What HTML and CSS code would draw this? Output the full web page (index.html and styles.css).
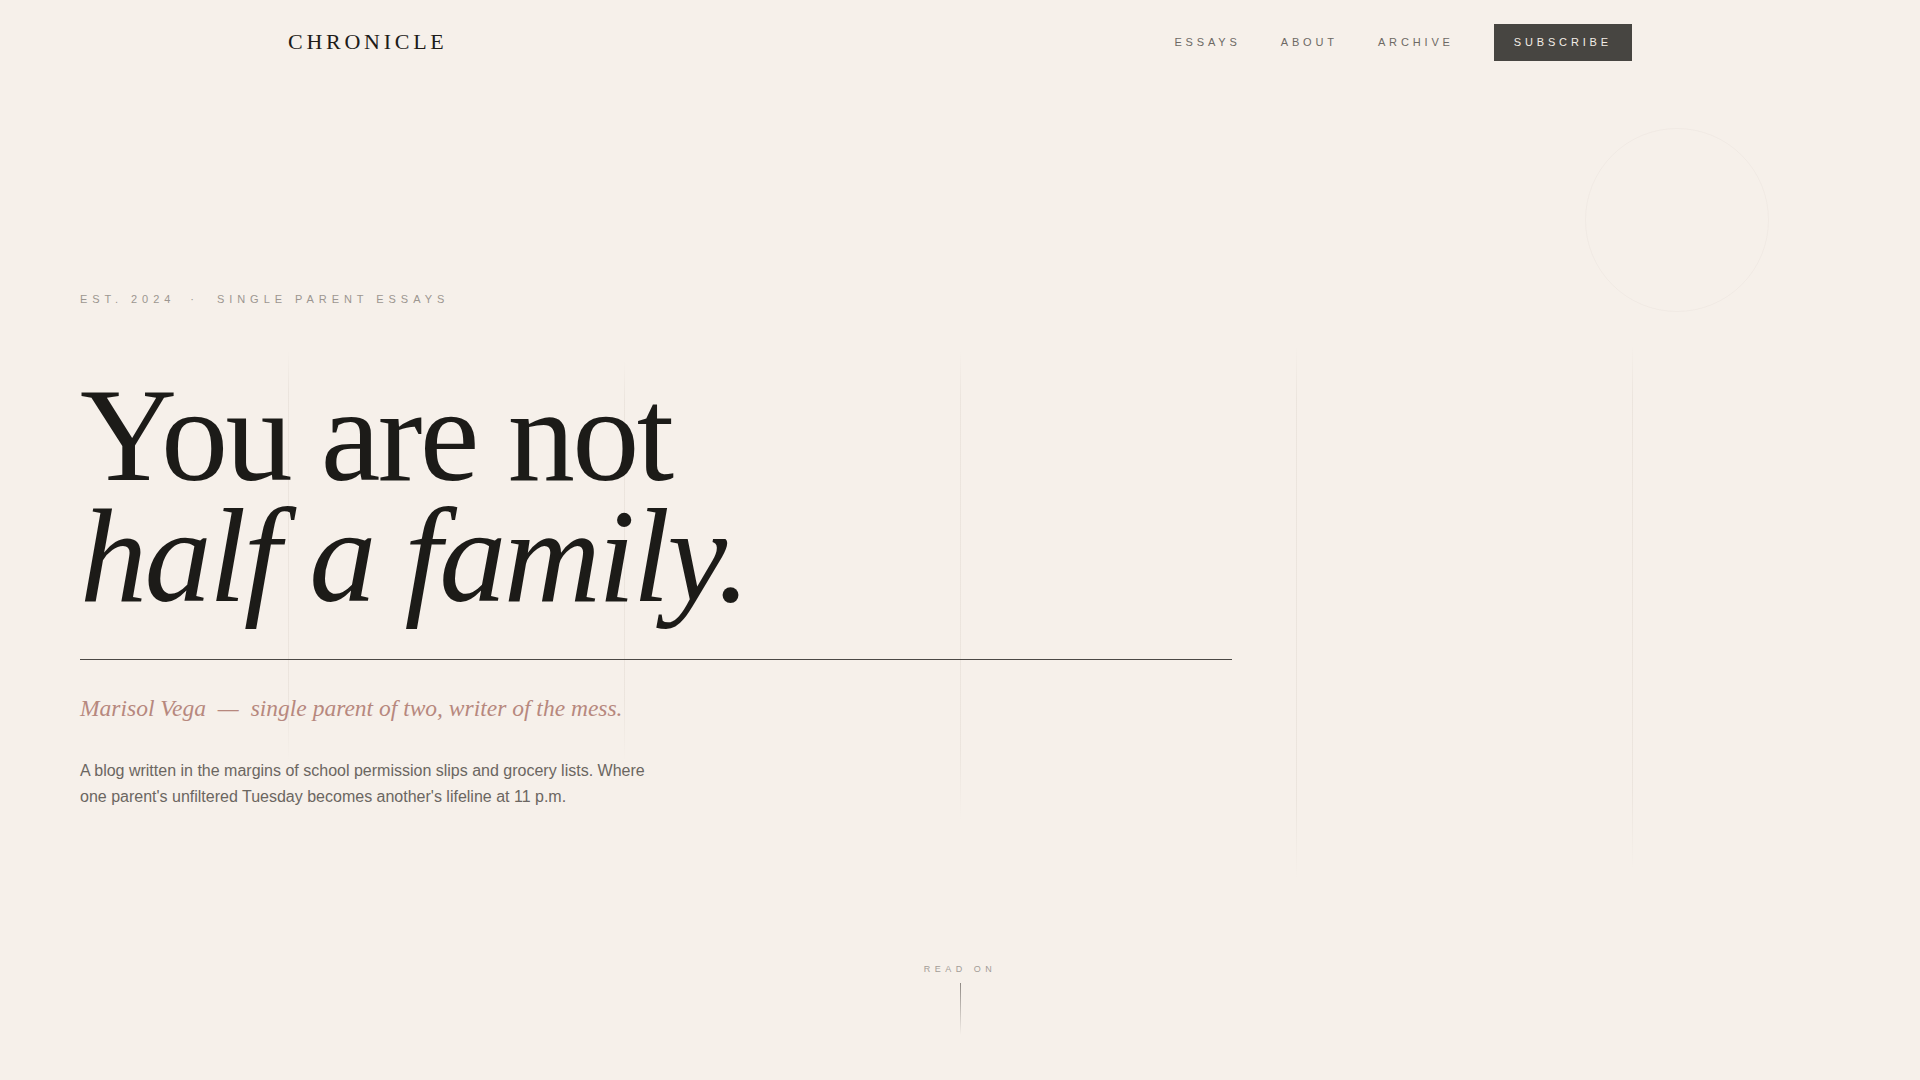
FILE: index.html
```html
<!DOCTYPE html>
<html lang="en">
<head>
    <meta charset="UTF-8">
    <meta name="viewport" content="width=device-width, initial-scale=1.0">
    <title>Chronicle</title>
    <link rel="stylesheet" href="styles.css">
</head>
<body>

    <header class="site-header">
        <a class="logo" href="#">CHRONICLE</a>
        <nav class="nav">
            <a href="#">Essays</a>
            <a href="#">About</a>
            <a href="#">Archive</a>
            <a class="subscribe" href="#">Subscribe</a>
        </nav>
    </header>

    <!-- faint column rules + ring behind the hero -->
    <div class="grid-lines">
        <span></span><span></span><span></span><span></span><span></span>
    </div>
    <div class="ring"></div>

    <main class="hero">
        <p class="eyebrow">Est. 2024<span class="sep">·</span>Single Parent Essays</p>
        <h1 class="headline">You are not<br><em>half a family.</em></h1>
        <p class="byline">Marisol Vega <span class="dash">—</span> single parent of two, writer of the mess.</p>
        <p class="intro">A blog written in the margins of school permission slips and grocery lists. Where one parent's unfiltered Tuesday becomes another's lifeline at 11 p.m.</p>
    </main>

    <div class="read-on">
        <span>Read on</span>
        <i class="read-line"></i>
    </div>

</body>
</html>
```

FILE: styles.css
```css
body {
    margin: 0;
    background-color: #f6f0ea;
    font-family: "Liberation Sans", Arial, sans-serif;
    color: #1e1c19;
    min-height: 100vh;
    overflow: hidden;
}
a {
    text-decoration: none;
}

/* header */
.site-header {
    display: flex;
    justify-content: space-between;
    align-items: center;
    height: 84px;
    padding: 0 15%;
    position: relative;
    z-index: 2;
}
.logo {
    font-family: "Liberation Serif", "Times New Roman", serif;
    font-size: 22px;
    letter-spacing: 0.17em;
    color: #1e1c19;
}
.nav {
    display: flex;
    align-items: center;
    gap: 40px;
}
.nav a {
    font-size: 11px;
    line-height: 13px;
    letter-spacing: 0.35em;
    text-transform: uppercase;
    color: #6d6964;
}
.nav .subscribe {
    background-color: #474541;
    color: #f3ede6;
    padding: 12px 20px;
}

/* background decoration */
.grid-lines {
    position: absolute;
    top: 345px;
    left: 15%;
    right: 15%;
    height: 540px;
    pointer-events: none;
}
.grid-lines span {
    position: absolute;
    top: 0;
    width: 1px;
    background: linear-gradient(to bottom, rgba(90, 70, 50, 0), rgba(90, 70, 50, 0.065) 10%, rgba(90, 70, 50, 0.065) 85%, rgba(90, 70, 50, 0));
}
.grid-lines span:nth-child(1) { left: 0; top: 6px; height: 410px; }
.grid-lines span:nth-child(2) { left: 25%; top: 16px; height: 400px; }
.grid-lines span:nth-child(3) { left: 50%; top: 6px; height: 470px; }
.grid-lines span:nth-child(4) { left: 75%; top: 0; height: 535px; }
.grid-lines span:nth-child(5) { left: 100%; top: 0; height: 525px; }

.ring {
    position: absolute;
    top: 128px;
    left: 1585px;
    width: 182px;
    height: 182px;
    border-radius: 50%;
    border: 1px solid rgba(90, 70, 50, 0.035);
    pointer-events: none;
}

/* hero */
.hero {
    position: relative;
    z-index: 1;
    padding: 207px 80px 0;
}
.eyebrow {
    margin: 0;
    font-size: 11px;
    line-height: 16px;
    letter-spacing: 0.45em;
    text-transform: uppercase;
    color: #9c9690;
}
.eyebrow .sep {
    margin: 0 18px 0 15px;
}
.headline {
    width: 1152px;
    margin: 68px 0 0;
    padding-bottom: 42px;
    border-bottom: 1px solid #4b4845;
    font-family: "Liberation Serif", "Times New Roman", serif;
    font-weight: 400;
    font-size: 134.4px;
    line-height: 0.9;
    letter-spacing: -0.02em;
    color: #1c1b18;
}
.headline em {
    font-style: italic;
}
.byline {
    margin: 32px 0 0;
    font-family: "Liberation Serif", "Times New Roman", serif;
    font-style: italic;
    font-size: 23.5px;
    line-height: 1.4;
    color: #b7887e;
}
.byline .dash {
    margin: 0 6px;
}
.intro {
    max-width: 580px;
    margin: 33px 0 0;
    font-size: 16px;
    line-height: 26px;
    color: #6b6661;
}

/* scroll cue */
.read-on {
    display: flex;
    flex-direction: column;
    align-items: center;
    margin-top: 153px;
}
.read-on span {
    font-size: 9px;
    line-height: 12px;
    letter-spacing: 0.5em;
    text-transform: uppercase;
    color: #a39d97;
}
.read-line {
    display: block;
    width: 1px;
    height: 52px;
    margin-top: 8px;
    background: linear-gradient(to bottom, #8f8984, rgba(143, 137, 132, 0));
}
```
